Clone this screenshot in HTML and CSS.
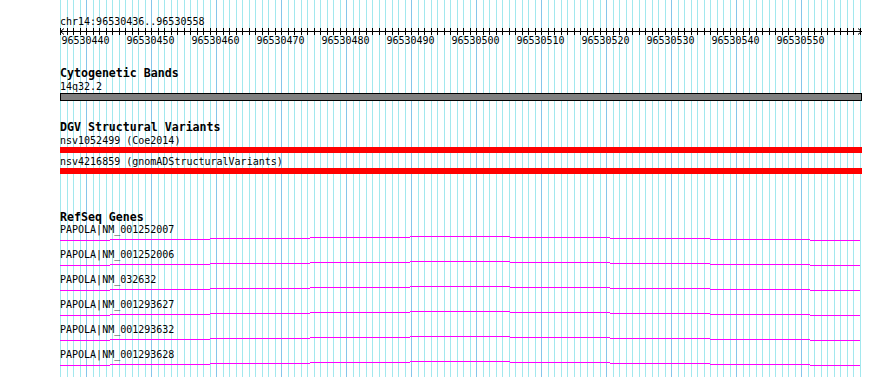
FILE: index.html
```html
<!DOCTYPE html>
<html lang="en">
<head>
    <meta charset="UTF-8">
    <title>chr14:96530436..96530558</title>
    <link rel="stylesheet" href="styles.css">
</head>
<body>
    <div class="panel">
        <svg class="grid" id="grid" width="802" height="377"></svg>

        <svg class="defs" width="0" height="0">
            <symbol id="intron" viewBox="0 0 800 5">
                <path d="M0 4h50v1H0z M50 3h100v1H50z M150 2h100v1H150z M250 1h100v1H250z M350 0h100v1H350z M450 1h100v1H450z M550 2h100v1H550z M650 3h100v1H650z M750 4h50v1H750z" fill="#ff00ff"/>
            </symbol>
        </svg>

        <div class="tracks">
            <div class="ruler">
                <div class="seg-name">chr14:96530436..96530558</div>
                <svg class="axis" id="axis" width="804" height="7"></svg>
                <div class="tick-labels">
                    <span>96530440</span>
                    <span>96530450</span>
                    <span>96530460</span>
                    <span>96530470</span>
                    <span>96530480</span>
                    <span>96530490</span>
                    <span>96530500</span>
                    <span>96530510</span>
                    <span>96530520</span>
                    <span>96530530</span>
                    <span>96530540</span>
                    <span>96530550</span>
                </div>
            </div>

            <div class="track cyto">
                <div class="track-title">Cytogenetic Bands</div>
                <div class="feat-label">14q32.2</div>
                <div class="band"></div>
            </div>

            <div class="track dgv">
                <div class="track-title">DGV Structural Variants</div>
                <div class="feat-label">nsv1052499 (Coe2014)</div>
                <div class="sv-bar"></div>
                <div class="feat-label second">nsv4216859 (gnomADStructuralVariants)</div>
                <div class="sv-bar"></div>
            </div>

            <div class="track refseq">
                <div class="track-title">RefSeq Genes</div>
                <div class="gene">
                    <div class="gene-label">PAPOLA|NM_001252007</div>
                    <svg class="intron" width="800" height="5"><use href="#intron"/></svg>
                </div>
                <div class="gene">
                    <div class="gene-label">PAPOLA|NM_001252006</div>
                    <svg class="intron" width="800" height="5"><use href="#intron"/></svg>
                </div>
                <div class="gene">
                    <div class="gene-label">PAPOLA|NM_032632</div>
                    <svg class="intron" width="800" height="5"><use href="#intron"/></svg>
                </div>
                <div class="gene">
                    <div class="gene-label">PAPOLA|NM_001293627</div>
                    <svg class="intron" width="800" height="5"><use href="#intron"/></svg>
                </div>
                <div class="gene">
                    <div class="gene-label">PAPOLA|NM_001293632</div>
                    <svg class="intron" width="800" height="5"><use href="#intron"/></svg>
                </div>
                <div class="gene">
                    <div class="gene-label">PAPOLA|NM_001293628</div>
                    <svg class="intron" width="800" height="5"><use href="#intron"/></svg>
                </div>
            </div>
        </div>
    </div>

    <script>
        // 123 bp over 800px -> 6.5px per base, one grid line per base
        const NS = 'http://www.w3.org/2000/svg';
        const bases = 123;
        const grid = document.getElementById('grid');
        const axis = document.getElementById('axis');

        function rect(parent, x, y, w, h, color) {
            const r = document.createElementNS(NS, 'rect');
            r.setAttribute('x', x);
            r.setAttribute('y', y);
            r.setAttribute('width', w);
            r.setAttribute('height', h);
            r.setAttribute('fill', color);
            parent.appendChild(r);
        }

        for (let k = 0; k <= bases; k++) {
            const x = Math.round(k * 6.5);
            const major = (k - 4) % 10 === 0;
            rect(grid, x, 0, 1, 377, major ? '#86c5ea' : '#a2e8ee');
            rect(axis, x, 0, 1, 7, '#000');
        }

        // axis line and end arrows
        rect(axis, 0, 3, 802, 1, '#000');
        const arrows = document.createElementNS(NS, 'path');
        arrows.setAttribute('d', 'M4 0.5L0.5 3.5L4 6.5 M798 0.5L801.5 3.5L798 6.5');
        arrows.setAttribute('stroke', '#000');
        arrows.setAttribute('fill', 'none');
        axis.appendChild(arrows);
    </script>
</body>
</html>
```

FILE: styles.css
```css
body {
    margin: 0;
    padding: 0;
    background-color: #fff;
    color: #000;
    font-family: "DejaVu Sans Mono", "Liberation Mono", monospace;
    font-size: 10px;
    line-height: 13px;
}
.panel {
    position: relative;
    width: 890px;
    height: 377px;
    overflow: hidden;
}
.grid {
    position: absolute;
    left: 60px;
    top: 0;
}
.defs {
    position: absolute;
}
.tracks {
    position: relative;
    padding-left: 60px;
}
.ruler {
    padding-top: 15px;
}
.seg-name {
    height: 13px;
}
.axis {
    display: block;
}
.tick-labels {
    display: flex;
    margin-top: -1px;
    margin-left: -7px;
}
.tick-labels span {
    width: 65px;
    flex: none;
    text-align: center;
}
.track-title {
    font-weight: bold;
    font-size: 11.6px;
}
.cyto {
    margin-top: 20px;
}
.band {
    width: 800px;
    height: 6px;
    background-color: #808080;
    border: 1px solid #000;
}
.dgv {
    margin-top: 20px;
}
.sv-bar {
    width: 802px;
    height: 6px;
    background-color: #ff0000;
}
.feat-label.second {
    margin-top: 2px;
}
.refseq {
    margin-top: 37px;
}
.gene {
    height: 25px;
}
.gene-label {
    line-height: 12px;
}
.intron {
    display: block;
}
```
